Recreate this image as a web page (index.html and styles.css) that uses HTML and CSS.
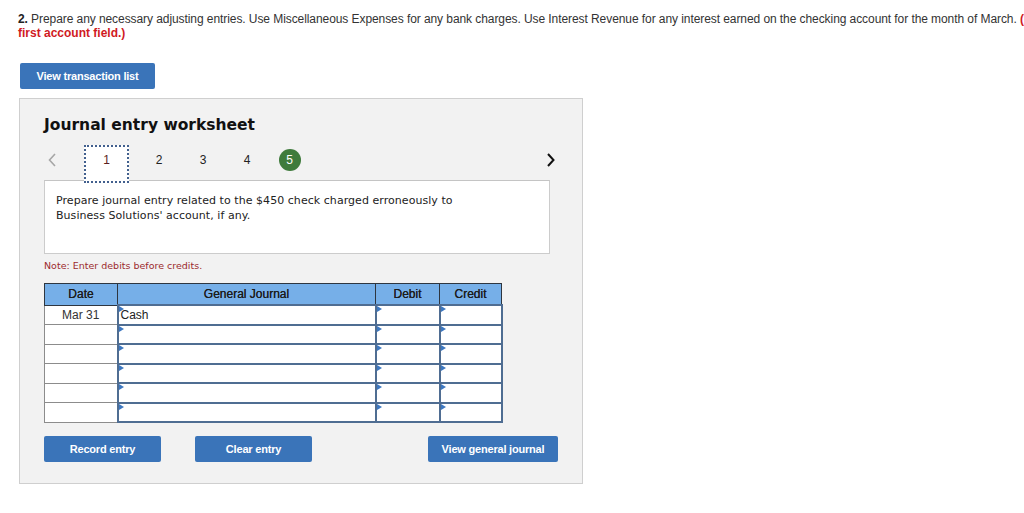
FILE: index.html
```html
<!DOCTYPE html>
<html>
<head>
<meta charset="utf-8">
<link rel="stylesheet" href="styles.css">
</head>
<body>
<div class="page">
  <p class="question"><span class="line"><b>2.</b> Prepare any necessary adjusting entries. Use Miscellaneous Expenses for any bank charges. Use Interest Revenue for any interest earned on the checking account for the month of March. <b class="red">(</b></span><b class="red">first account field.)</b></p>

  <button class="btn btn-list">View transaction list</button>

  <div class="panel">
    <h2 class="title">Journal entry worksheet</h2>
    <div class="nav">
      <div class="nav-left">
        <svg class="chev" width="8" height="14" viewBox="0 0 8 14"><polyline points="7,1 1.5,7 7,13" fill="none" stroke="#a6a6a6" stroke-width="1.6"/></svg>
        <span class="tab">1</span>
        <span class="num">2</span>
        <span class="num">3</span>
        <span class="num">4</span>
        <span class="num"><span class="done">5</span></span>
      </div>
      <svg class="chev right" width="8" height="14" viewBox="0 0 8 14"><polyline points="1,1 6.5,7 1,13" fill="none" stroke="#111" stroke-width="2"/></svg>
    </div>
    <div class="desc">Prepare journal entry related to the $450 check charged erroneously to<br>Business Solutions' account, if any.</div>
    <p class="note">Note: Enter debits before credits.</p>

    <table class="journal">
      <thead>
        <tr><th class="c-date">Date</th><th class="c-acct">General Journal</th><th class="c-dr">Debit</th><th class="c-cr">Credit</th></tr>
      </thead>
      <tbody>
        <tr><td class="date">Mar 31</td><td class="in acct">Cash</td><td class="in"></td><td class="in"></td></tr>
        <tr><td class="date"></td><td class="in acct"></td><td class="in"></td><td class="in"></td></tr>
        <tr><td class="date"></td><td class="in acct"></td><td class="in"></td><td class="in"></td></tr>
        <tr><td class="date"></td><td class="in acct"></td><td class="in"></td><td class="in"></td></tr>
        <tr><td class="date"></td><td class="in acct"></td><td class="in"></td><td class="in"></td></tr>
        <tr><td class="date"></td><td class="in acct"></td><td class="in"></td><td class="in"></td></tr>
      </tbody>
    </table>

    <div class="actions">
      <div class="left-actions">
        <button class="btn btn-wide">Record entry</button>
        <button class="btn btn-wide">Clear entry</button>
      </div>
      <button class="btn btn-journal">View general journal</button>
    </div>
  </div>
</div>
</body>
</html>
```
FILE: styles.css
```css
html, body {
  margin: 0;
  padding: 0;
  background: #fff;
  overflow: hidden;
}
.page {
  padding: 12px 0 0 0;
  font-family: "Liberation Sans", Arial, sans-serif;
  color: #333;
}
.question {
  margin: 0 0 0 18px;
  font-size: 12px;
  line-height: 14px;
  width: 1100px;
}
.question .line {
  display: block;
  white-space: nowrap;
  letter-spacing: -0.075px;
}
.question b {
  color: #222;
}
.question .red {
  color: #d01a1f;
}
.btn {
  font-family: "Liberation Sans", Arial, sans-serif;
  font-weight: bold;
  font-size: 11px;
  letter-spacing: -0.2px;
  color: #fff;
  background: #3a74b9;
  border: 0;
  border-radius: 2px;
  height: 26px;
  padding: 0;
  display: block;
}
.btn-list {
  margin: 23px 0 0 20px;
  width: 135px;
}
.panel {
  margin: 9px 0 0 19px;
  height: 384px;
  border: 1px solid #cfcfcf;
  background: #f2f2f2;
  padding: 0 23px 0 24px;
  box-sizing: content-box;
  width: 515px;
}
.title {
  margin: 0;
  padding-top: 16px;
  font-family: "DejaVu Sans", Verdana, sans-serif;
  font-weight: bold;
  font-size: 15.5px;
  line-height: 20px;
  color: #111;
}
.nav {
  display: flex;
  align-items: center;
  justify-content: space-between;
  margin-top: 10px;
  height: 30px;
  margin-bottom: 5px;
  position: relative;
  z-index: 1;
  width: 515px;
}
.nav-left {
  display: flex;
  align-items: center;
  height: 30px;
}
.chev {
  display: block;
  margin-left: 4px;
}
.chev.right {
  margin-right: 4px;
}
.tab {
  align-self: flex-start;
  margin-left: 28px;
  width: 41px;
  height: 34px;
  border: 2px dotted #42608e;
  background: #fff;
  text-align: center;
  line-height: 26px;
  font-size: 12px;
  color: #5a1e1e;
}
.num {
  width: 44px;
  display: flex;
  justify-content: center;
  font-size: 12px;
  color: #222;
}
.tab + .num {
  margin-left: 8px;
}
.done {
  width: 22px;
  height: 22px;
  border-radius: 50%;
  background: #3f7b3c;
  color: #fff;
  display: flex;
  align-items: center;
  justify-content: center;
  font-size: 12px;
  margin-left: -3px;
}
.desc {
  width: 493px;
  height: 60px;
  background: #fff;
  border: 1px solid #cccccc;
  border-top-color: #c4c4c4;
  padding: 12px 0 0 11px;
  box-sizing: content-box;
  font-family: "DejaVu Sans", Verdana, sans-serif;
  font-size: 11px;
  letter-spacing: 0.05px;
  line-height: 15px;
  color: #222;
}
.note {
  margin: 6px 0 0 0;
  font-family: "DejaVu Sans", Verdana, sans-serif;
  font-size: 9.5px;
  line-height: 12px;
  color: #9c2a2e;
}
.journal {
  margin-top: 11px;
  border-collapse: collapse;
  table-layout: fixed;
  width: 453px;
  font-family: "Liberation Sans", Arial, sans-serif;
  font-size: 12px;
}
.journal th {
  background: #76afe8;
  border: 1px solid #2e3640;
  height: 20px;
  padding: 0;
  font-weight: normal;
  color: #1d1d1d;
  text-shadow: 0 0 0.3px #1d1d1d;
}
.c-date { width: 72px; }
.c-acct { width: 257px; }
.c-dr { width: 63px; }
.c-cr { width: 61px; }
.journal td {
  height: 17.5px;
  padding: 0;
  background: #fff;
}
.journal td.date {
  border: 1px solid #8c8c8c;
  text-align: center;
  color: #333;
}
.journal td.in {
  border: 2px solid #4f6d92;
  position: relative;
  vertical-align: middle;
}
.journal td.in::before {
  content: "";
  position: absolute;
  left: 0;
  top: 0;
  border-left: 5px solid #3e78c0;
  border-top: 3px solid transparent;
  border-bottom: 3px solid transparent;
}
.journal td.acct {
  padding-left: 2px;
  color: #222;
}
.actions {
  display: flex;
  justify-content: space-between;
  margin-top: 13px;
  width: 514px;
}
.left-actions {
  display: flex;
  gap: 34px;
}
.btn-wide {
  width: 117px;
}
.btn-journal {
  width: 130px;
}
```
